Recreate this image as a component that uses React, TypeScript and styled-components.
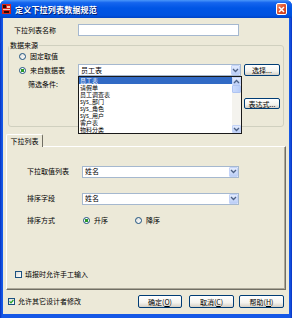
import React from "react";
import styled, { createGlobalStyle } from "styled-components";

const GlobalStyle = createGlobalStyle`
    html, body {
        margin: 0;
        padding: 0;
        background: #ffffff;
    }
    body {
        font-family: "Noto Sans CJK SC", "Liberation Sans", sans-serif;
        font-size: 7px;
        color: #000;
    }
    * {
        box-sizing: border-box;
    }
`;

const tables = [
    "员工表",
    "请假单",
    "员工调查表",
    "sys_部门",
    "sys_角色",
    "sys_用户",
    "客户表",
    "物料分类",
];

const Chevron: React.FC<{ up?: boolean }> = ({ up }) => (
    <svg width="7" height="5" viewBox="0 0 7 5">
        <path
            d={up ? "M1 4 L3.5 1.5 L6 4" : "M1 1 L3.5 3.5 L6 1"}
            fill="none"
            stroke="#4D6185"
            strokeWidth="1.3"
        />
    </svg>
);

const Combo: React.FC<{ value: string; width: number; open?: boolean }> = ({
    value,
    width,
    open,
}) => (
    <ComboBox $width={width}>
        <span>{value}</span>
        <ArrowBtn>
            <Chevron />
        </ArrowBtn>
        {open && (
            <DropList>
                <Items>
                    {tables.map((t, i) => (
                        <Item key={t} $selected={i === 0}>
                            {t}
                        </Item>
                    ))}
                </Items>
                <ScrollBar>
                    <ScrollBtn>
                        <Chevron up />
                    </ScrollBtn>
                    <Thumb />
                    <Track />
                    <ScrollBtn>
                        <Chevron />
                    </ScrollBtn>
                </ScrollBar>
            </DropList>
        )}
    </ComboBox>
);

const Check: React.FC<{ checked?: boolean }> = ({ checked }) => (
    <CheckBox>
        {checked && (
            <svg width="5" height="5" viewBox="0 0 5 5">
                <path d="M0.6 2.4 L2 3.8 L4.4 1" fill="none" stroke="#21A121" strokeWidth="1.2" />
            </svg>
        )}
    </CheckBox>
);

export default function App() {
    return (
        <>
            <GlobalStyle />
            <Window>
                <TitleBar>
                    <svg width="9" height="10" viewBox="0 0 9 10">
                        <rect x="0" y="0" width="9" height="10" fill="#D8261C" />
                        <rect x="1" y="1" width="3" height="3" fill="#2A0A08" />
                        <rect x="5" y="2" width="3" height="2" fill="#F6C7B8" />
                        <rect x="1" y="5" width="7" height="1" fill="#F6C7B8" />
                        <rect x="2" y="7" width="5" height="2" fill="#2A0A08" />
                    </svg>
                    <Title>定义下拉列表数据规范</Title>
                    <CloseBtn>
                        <svg width="7" height="7" viewBox="0 0 7 7">
                            <path d="M1 1 L6 6 M6 1 L1 6" stroke="#fff" strokeWidth="1.5" />
                        </svg>
                    </CloseBtn>
                </TitleBar>
                <Client>
                    <NameRow>
                        <NameLabel>下拉列表名称</NameLabel>
                        <TextInput />
                    </NameRow>

                    <Group>
                        <Legend>数据来源</Legend>
                        <GroupBody>
                            <RadioRow>
                                <Radio />
                                <RadioText>固定取值</RadioText>
                            </RadioRow>
                            <SourceRow>
                                <SourceLabel>
                                    <Radio $checked />
                                    <RadioText>来自数据表</RadioText>
                                </SourceLabel>
                                <Combo value="员工表" width={163} open />
                                <Button $width={36} $height={12} $ml={3}>选择...</Button>
                            </SourceRow>
                            <FilterLabel>筛选条件:</FilterLabel>
                            <ExprRow>
                                <Button $width={36} $height={11}>表达式...</Button>
                            </ExprRow>
                        </GroupBody>
                    </Group>

                    <TabStrip>
                        <Tab>下拉列表</Tab>
                    </TabStrip>
                    <TabPage>
                        <FieldRow>
                            <FieldLabel>下拉取值列表</FieldLabel>
                            <Combo value="姓名" width={157} />
                        </FieldRow>
                        <FieldRow $gap={16}>
                            <FieldLabel>排序字段</FieldLabel>
                            <Combo value="姓名" width={157} />
                        </FieldRow>
                        <FieldRow $gap={11}>
                            <FieldLabel>排序方式</FieldLabel>
                            <SortOption>
                                <Radio $checked />
                                <RadioText>升序</RadioText>
                            </SortOption>
                            <SortOption>
                                <Radio />
                                <RadioText>降序</RadioText>
                            </SortOption>
                        </FieldRow>
                        <ManualRow>
                            <Check />
                            <CheckText>填报时允许手工输入</CheckText>
                        </ManualRow>
                    </TabPage>

                    <Footer>
                        <Check checked />
                        <CheckText>允许其它设计者修改</CheckText>
                        <Buttons>
                            <Button $width={44} $height={13}>
                                确定(<u>O</u>)
                            </Button>
                            <Button $width={45} $height={13} $ml={7}>
                                取消(<u>C</u>)
                            </Button>
                            <Button $width={45} $height={13} $ml={5}>
                                帮助(<u>H</u>)
                            </Button>
                        </Buttons>
                    </Footer>
                </Client>
            </Window>
        </>
    );
}

const Window = styled.div`
    width: 292px;
    height: 318px;
    display: flex;
    flex-direction: column;
    background: linear-gradient(90deg, #0831C0 0px, #1558E6 2px, #1558E6 290px, #0831C0 292px);
    border-radius: 6px 6px 0 0;
    overflow: hidden;
`;

const TitleBar = styled.div`
    height: 18px;
    flex-shrink: 0;
    display: flex;
    align-items: center;
    padding-left: 2px;
    background: linear-gradient(
        180deg,
        #4A97FA 0%,
        #1565EE 15%,
        #0055E5 45%,
        #0052E0 85%,
        #0043C6 100%
    );
`;

const Title = styled.span`
    margin-left: 4px;
    font-size: 8px;
    font-weight: bold;
    color: #fff;
    text-shadow: 1px 1px 0 #0A1E6E;
    letter-spacing: 0.2px;
`;

const CloseBtn = styled.div`
    margin-left: auto;
    margin-right: 5px;
    width: 11px;
    height: 12px;
    display: flex;
    align-items: center;
    justify-content: center;
    border: 1px solid #fff;
    border-radius: 2px;
    background: linear-gradient(135deg, #F0906E 0%, #E2552F 45%, #C8391A 100%);
`;

const Client = styled.div`
    flex: 1;
    margin: 0 3px 4px 3px;
    background: #ECE9D8;
    display: flex;
    flex-direction: column;
    padding: 6px 0 6px 0;
`;

const NameRow = styled.div`
    display: flex;
    align-items: center;
    height: 12px;
    padding-left: 11px;
`;

const NameLabel = styled.span`
    width: 64px;
`;

const TextInput = styled.div`
    width: 161px;
    height: 12px;
    background: #fff;
    border: 1px solid #A5B8CF;
`;

const Group = styled.fieldset`
    margin: 5px 0 0 5px;
    width: 276px;
    min-width: 0;
    padding: 0 3px 17px 0;
    border: 1px solid #D0D0BF;
    border-radius: 3px;
`;

const Legend = styled.legend`
    padding: 0 1px;
    margin-left: 0;
    line-height: 9px;
    font-size: 7px;
`;

const GroupBody = styled.div`
    padding-left: 10px;
`;

const RadioRow = styled.div`
    display: flex;
    align-items: center;
    height: 13px;
`;

const Radio = styled.span<{ $checked?: boolean }>`
    width: 7px;
    height: 7px;
    flex-shrink: 0;
    border-radius: 50%;
    border: 1px solid #1C5180;
    background: ${(p) =>
        p.$checked
            ? "radial-gradient(circle, #2A9A2A 0 1.6px, #ffffff 1.7px)"
            : "linear-gradient(135deg, #DCDCD7, #ffffff)"};
`;

const RadioText = styled.span`
    margin-left: 4px;
    line-height: 9px;
`;

const SourceRow = styled.div`
    display: flex;
    align-items: center;
    height: 14px;
`;

const SourceLabel = styled.div`
    display: flex;
    align-items: center;
    width: 59px;
`;

const ComboBox = styled.div<{ $width: number }>`
    position: relative;
    width: ${(p) => p.$width}px;
    height: 12px;
    display: flex;
    align-items: center;
    padding-left: 2px;
    background: #fff;
    border: 1px solid #A5B8CF;
    line-height: 9px;
`;

const ArrowBtn = styled.div`
    margin-left: auto;
    width: 9px;
    height: 10px;
    display: flex;
    align-items: center;
    justify-content: center;
    border-radius: 1px;
    background: linear-gradient(180deg, #E4ECFD, #BBCEF6);
    border: 1px solid #C3D3F8;
`;

const DropList = styled.div`
    position: absolute;
    top: 11px;
    left: -1px;
    width: 164px;
    height: 58px;
    display: flex;
    background: #fff;
    border: 1px solid #1A1A1A;
    z-index: 5;
`;

const Items = styled.div`
    flex: 1;
    display: flex;
    flex-direction: column;
`;

const Item = styled.div<{ $selected?: boolean }>`
    height: 7px;
    line-height: 7px;
    font-size: 6px;
    padding-left: 1px;
    white-space: nowrap;
    background: ${(p) => (p.$selected ? "#316AC5" : "transparent")};
    color: ${(p) => (p.$selected ? "#fff" : "#000")};
`;

const ScrollBar = styled.div`
    width: 9px;
    display: flex;
    flex-direction: column;
    background: #F4F3EE;
`;

const ScrollBtn = styled.div`
    height: 8px;
    display: flex;
    align-items: center;
    justify-content: center;
    background: linear-gradient(180deg, #E4ECFD, #BBCEF6);
    border: 1px solid #C3D3F8;
    border-radius: 1px;
`;

const Thumb = styled.div`
    height: 8px;
    background: linear-gradient(90deg, #CADAFC, #B8CDF8);
    border: 1px solid #AFC4F2;
    border-radius: 1px;
`;

const Track = styled.div`
    flex: 1;
`;

const Button = styled.div<{ $width: number; $height: number; $ml?: number }>`
    width: ${(p) => p.$width}px;
    height: ${(p) => p.$height}px;
    display: flex;
    align-items: center;
    justify-content: center;
    margin-left: ${(p) => p.$ml ?? 0}px;
    border: 1px solid #003C74;
    border-radius: 2px;
    background: linear-gradient(180deg, #FFFFFF 0%, #F4F3EE 60%, #D6D0C5 100%);
    line-height: 8px;
    white-space: nowrap;

    u {
        text-decoration: underline;
    }
`;

const FilterLabel = styled.div`
    margin-top: 3px;
    padding-left: 9px;
    line-height: 9px;
`;

const ExprRow = styled.div`
    display: flex;
    justify-content: flex-end;
    margin-top: 9px;
`;

const TabStrip = styled.div`
    display: flex;
    margin-top: 7px;
    padding-left: 3px;
`;

const Tab = styled.div`
    width: 37px;
    height: 13px;
    margin-bottom: -1px;
    display: flex;
    align-items: center;
    justify-content: center;
    background: #ECE9D8;
    border-top: 1px solid #fff;
    border-left: 1px solid #fff;
    border-right: 1px solid #716F64;
    border-radius: 2px 2px 0 0;
    position: relative;
    z-index: 1;
`;

const TabPage = styled.div`
    flex: 1;
    margin: 0 3px;
    display: flex;
    flex-direction: column;
    padding: 19px 0 10px 0;
    border-top: 1px solid #fff;
    border-left: 1px solid #fff;
    border-right: 1px solid #716F64;
    border-bottom: 1px solid #716F64;
    box-shadow: inset -1px -1px 0 #ACA899;
`;

const FieldRow = styled.div<{ $gap?: number }>`
    display: flex;
    align-items: center;
    height: 11px;
    padding-left: 20px;
    margin-top: ${(p) => p.$gap ?? 0}px;
`;

const FieldLabel = styled.span`
    width: 55px;
    line-height: 9px;
`;

const SortOption = styled.div`
    display: flex;
    align-items: center;
    width: 52px;
    padding-left: 1px;
`;

const ManualRow = styled.div`
    margin-top: auto;
    display: flex;
    align-items: center;
    height: 9px;
    padding-left: 8px;
`;

const CheckBox = styled.span`
    width: 7px;
    height: 7px;
    flex-shrink: 0;
    display: flex;
    align-items: center;
    justify-content: center;
    border: 1px solid #1C5180;
    background: linear-gradient(135deg, #DCDCD7, #ffffff);
`;

const CheckText = styled.span`
    margin-left: 3px;
    line-height: 9px;
`;

const Footer = styled.div`
    display: flex;
    align-items: center;
    height: 13px;
    margin-top: 5px;
    padding: 0 5px 0 5px;
`;

const Buttons = styled.div`
    margin-left: auto;
    display: flex;
    align-items: center;
`;
